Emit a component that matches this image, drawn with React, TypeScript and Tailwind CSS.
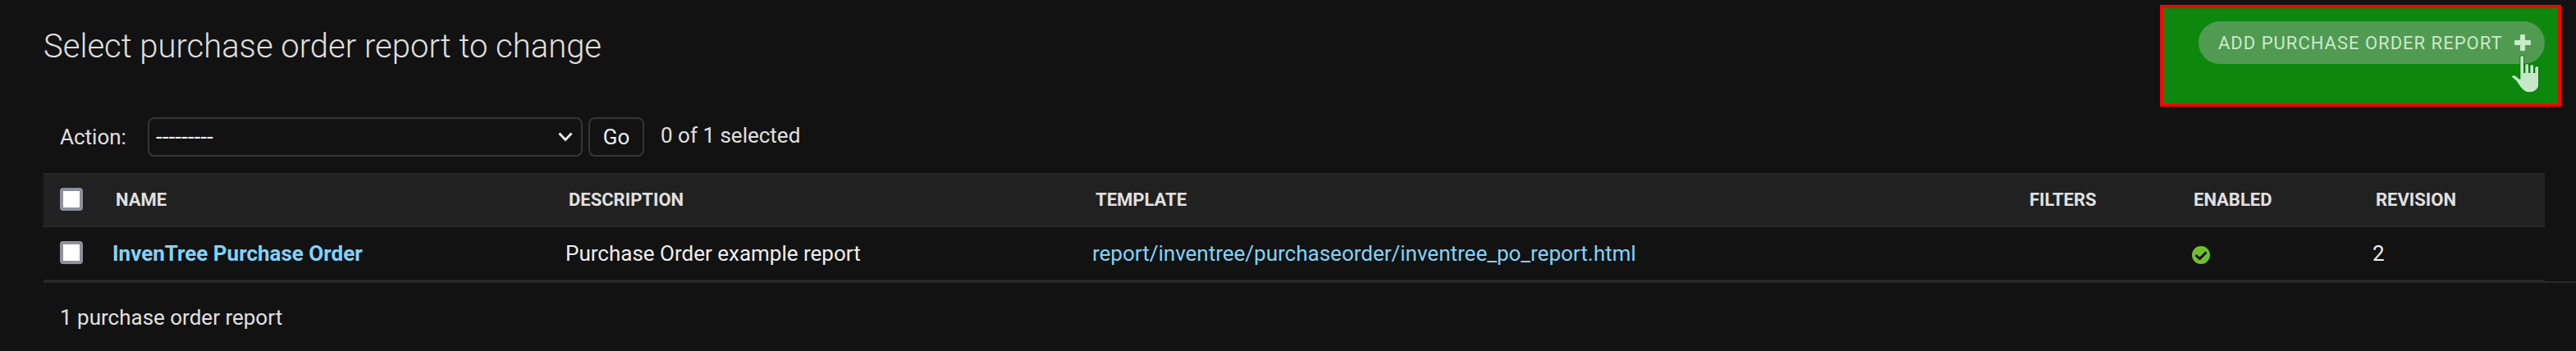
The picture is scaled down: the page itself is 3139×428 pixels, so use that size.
const heads = ["Name", "Description", "Template", "Filters", "Enabled", "Revision"];

function Box() {
  return <span className="block h-[28px] w-[28px] rounded-[4px] border-4 border-[#8f8f9d] bg-white" />;
}

export default function App() {
  return (
    <div className="flex h-[428px] w-[3139px] flex-col overflow-hidden bg-[#121212] font-['Roboto',sans-serif] text-[26px] leading-[30px] text-[#e0e0e0]">
      <header className="flex h-[143px] items-start justify-between pl-[53px] pr-[18px] pt-[6px]">
        <h1 className="pt-[27px] text-[40px] font-light leading-[47px]">Select purchase order report to change</h1>
        <div className="relative flex h-[124px] w-[489px] items-start justify-end border-4 border-[#ff0000] bg-[#0d870d] pr-[16px] pt-[16px]">
          <a className="flex h-[52px] w-[422px] items-center whitespace-nowrap rounded-full bg-[#519a51] pl-[24px] text-[22px] tracking-[1px] text-[#c9ebc9]">
            <span className="pt-[1px]">ADD PURCHASE ORDER REPORT</span>
            <svg className="ml-[13px] mt-[-1px]" width="22" height="22" viewBox="0 0 22 22" fill="#c9ebc9">
              <rect x="8" y="1" width="6" height="20" rx="1.2" />
              <rect x="1" y="8" width="20" height="6" rx="1.2" />
            </svg>
          </a>
          <svg className="absolute left-[423px] top-[56px]" width="36" height="50" viewBox="0 0 36 50">
            <path
              d="M12.300 4Q12.300 2 14.200 2T16 4V23H18.300V14Q18.300 12 20.200 12T22 14V23H24.300V15Q24.300 13 26.200 13T28 15V23H30.300V17Q30.300 15 32.200 15T34 17V39Q33.500 42 29 45Q27 46.300 23.500 46.300T18.300 45.300Q15 43 12.500 40L7.500 32.500L2.500 28.500Q1.500 27 3 26.200Q5.500 25.500 8 28L11 30.800H12.300Z"
              fill="#c5e8c8"
              stroke="#0a750a"
              strokeWidth="1.6"
              paintOrder="stroke"
            />
          </svg>
        </div>
      </header>

      <div className="flex h-[68px] items-start pl-[73px]">
        <span className="w-[107px] pt-[9px]">Action:</span>
        <div className="flex h-[48px] w-[530px] items-center justify-between rounded-[8px] border-2 border-[#353535] pl-[8px] pr-[10px] text-[28px] text-[#eeeeee]">
          <span>---------</span>
          <svg width="18" height="12" viewBox="0 0 18 12" fill="none" stroke="#eeeeee" strokeWidth="2.800">
            <path d="M1.500 1.500 9 9.500l7.500-8" />
          </svg>
        </div>
        <button className="ml-[7px] h-[48px] w-[68px] rounded-[8px] border-2 border-[#353535] text-[#eeeeee]">Go</button>
        <span className="ml-[20px] pt-[7px]">0 of 1 selected</span>
      </div>

      <div className="ml-[53px] w-[3048px]">
        <div className="grid h-[66px] grid-cols-[69px_552px_641px_1138px_200px_222px_1fr] items-center border-y-2 border-[#282828] bg-[#212121] text-[22px] font-bold uppercase">
          <div className="pb-[2px] pl-[20px]"><Box /></div>
          {heads.map((h, i) => (
            <div key={h} className={i < 2 ? "pl-[19px]" : "pl-[20px]"}>{h}</div>
          ))}
        </div>
        <div className="grid h-[66px] grid-cols-[69px_552px_641px_1138px_200px_222px_1fr] items-center border-b-2 border-[#282828] text-[#eeeeee]">
          <div className="pb-[2px] pl-[20px]"><Box /></div>
          <div className="pl-[15px] font-bold text-[#81d4fa]">InvenTree Purchase Order</div>
          <div className="pl-[15px]">Purchase Order example report</div>
          <div className="pl-[16px] text-[#81d4fa]">report/inventree/purchaseorder/inventree_po_report.html</div>
          <div />
          <div className="pl-[18px] pt-[4px]">
            <svg width="22" height="22" viewBox="0 0 22 22">
              <circle cx="11" cy="11" r="11" fill="#70bf2b" />
              <path d="m4.500 11 5 4.500 8-8" fill="none" stroke="#121212" strokeWidth="3" />
            </svg>
          </div>
          <div className="pl-[16px]">2</div>
        </div>
      </div>
      <footer className="ml-[53px] h-[85px] border-t-2 border-[#282828] pl-[20px] pt-[27px]">1 purchase order report</footer>
    </div>
  );
}
